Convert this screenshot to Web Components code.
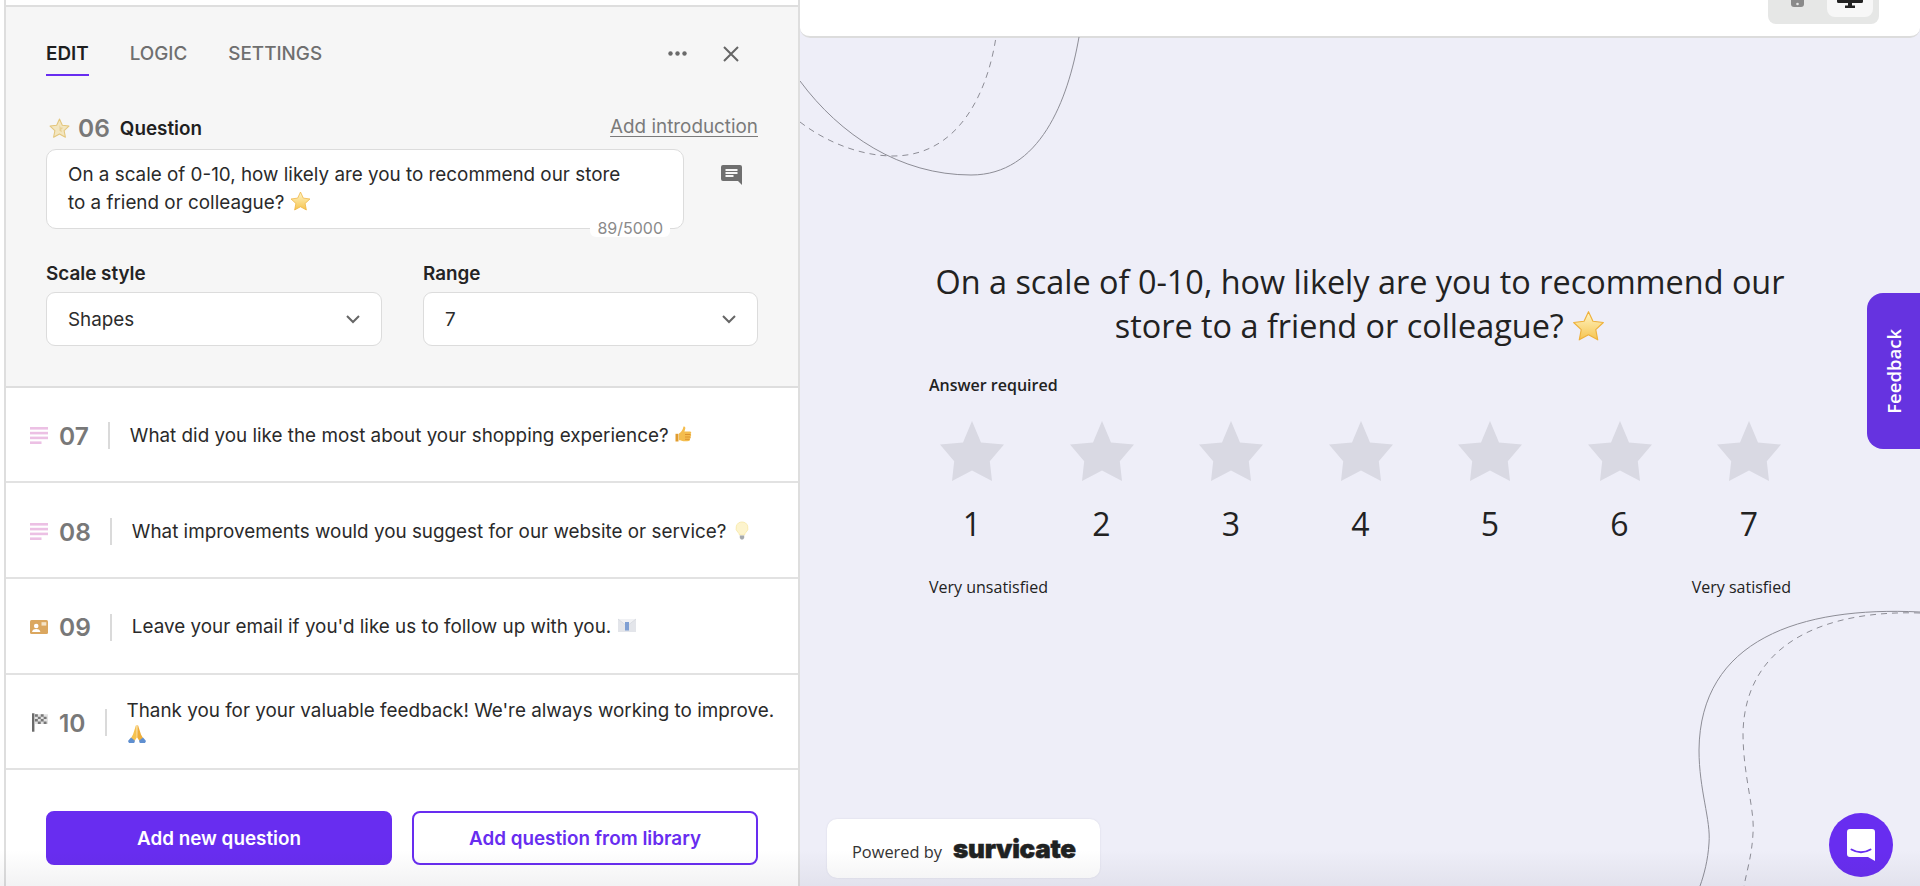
<!DOCTYPE html>
<html lang="en">
<head>
<meta charset="utf-8">
<title>Survey editor</title>
<style>
	html, body { margin: 0; padding: 0; height: 100%; background: #fff; overflow: hidden; }
</style>
</head>
<body>
<survey-app></survey-app>

<script>
const EMOJI = {
	star: `<svg viewBox="0 0 20 20"><defs><linearGradient id="g" x1="0" y1="0" x2="0" y2="1"><stop offset="0" stop-color="#fff6c8"/><stop offset="1" stop-color="#f6c44f"/></linearGradient></defs><path d="M10 1l2.700 5.800 6.300.8-4.600 4.300 1.200 6.200L10 15l-5.600 3.100 1.200-6.200L1 7.600l6.300-.8z" fill="url(#g)" stroke="#eeb13c" stroke-width=".7" stroke-linejoin="round"/></svg>`,
	thumb: `<svg viewBox="0 0 20 20"><path d="M9.500 1.500c1.300-.4 2 .7 1.800 2-.1 1-.6 2-.9 3h5.500c1.600 0 1.800 2 .6 2.400 1 .6.900 2.100-.2 2.500.8.700.5 2-.5 2.300.5.800.1 2-1 2.200-1.800.5-5 .6-7.200-.1-1-.4-1.600-.5-2.600-.5V8.500c1.800-.8 3.900-3.500 4.500-7z" fill="#f4bd4e"/><path d="M1.500 8.800h3v7.700h-3z" fill="#e09c2f"/><path d="M11 9.500h5.500M11 12h5.500M11 14.300h4.500" stroke="#d98f2b" stroke-width=".9" fill="none"/></svg>`,
	bulb: `<svg viewBox="0 0 20 20"><path d="M10 1a6 6 0 0 0-3.600 10.800c.7.600.9 1.300 1 2.200h5.200c.1-.9.300-1.600 1-2.200A6 6 0 0 0 10 1z" fill="#fdf4cd" stroke="#f8e8a8" stroke-width=".8"/><path d="M7.800 14.500h4.400v2.400l-1.200 1.600H9l-1.200-1.600z" fill="#a5a9ad"/></svg>`,
	mail: `<svg viewBox="0 0 20 20"><path d="M1 3h18v13H1z" fill="#e3e5ea"/><path d="M1 3l9 7 9-7" fill="#f0f1f4" stroke="#cfd2d9" stroke-width=".6"/><path d="M8 6h4v8.500H8z" fill="#7f9fd3"/></svg>`,
	pray: `<svg viewBox="0 0 20 20"><path d="M9.600 1c-.9.200-1.100 1.500-1.500 2.900L6 10.400 4 14l3.500 3 2.300-3.500z" fill="#f6c24f"/><path d="M10.400 1c.9.200 1.100 1.500 1.500 2.900l2.100 6.500 2 3.600-3.500 3-2.300-3.500z" fill="#eeae3a"/><path d="M1 17l3-3.600 4 3.300-.8 2.300H2z" fill="#5f8fd0"/><path d="M19 17l-3-3.600-4 3.300.8 2.300H18z" fill="#5f8fd0"/></svg>`
}

const TYPE_ICONS = {
	star: `<svg viewBox="0 0 20 20" width="21" height="21"><path d="M10 1l2.700 5.900 6.300.8-4.600 4.300 1.200 6.300L10 15.200l-5.600 3.100 1.200-6.300L1 7.700l6.300-.8z" fill="#f3e6c0" stroke="#e3c67c" stroke-width="1" stroke-linejoin="round"/><path d="M10 6.500l1 2.600 2.600.2-2 1.700.7 2.600-2.300-1.400z" fill="#e8d093"/></svg>`,
	lines: `<svg viewBox="0 0 18 17" width="18" height="17"><g fill="#ecc0e4"><rect width="18" height="2.600"/><rect y="4.800" width="18" height="2.600"/><rect y="9.600" width="18" height="2.600"/><rect y="14.400" width="11.500" height="2.600"/></g></svg>`,
	card: `<svg viewBox="0 0 18 14" width="18" height="14"><rect width="18" height="14" rx="1.500" fill="#dba75f"/><circle cx="6.200" cy="6" r="2.300" fill="#fff"/><path d="M2 12c.5-2.400 2.300-3 4.200-3s3.700.6 4.200 3z" fill="#fff"/><rect x="11.500" y="2.200" width="4.800" height="3.400" fill="#f5e4c8"/></svg>`,
	flag: `<svg viewBox="0 0 17 19" width="17" height="19" style="margin-left:1.500px"><rect x="0" y="0" width="2.500" height="19" fill="#6b6b6b"/><rect x="3" y="1" width="13.500" height="10" fill="#e2e2e2"/><path d="M3 1h3v2.500H3zM9 1h3v2.500H9zM6 3.500h3V6H6zM12 3.500h3V6h-3zM3 6h3v2.500H3zM9 6h3v2.500H9zM6 8.500h3V11H6zM12 8.500h3V11h-3z" fill="#777"/></svg>`
}

class EmojiIcon extends HTMLElement {
	constructor() {
		super()
		const shadow = this.attachShadow({ mode: 'open' })
		const size = this.getAttribute('size') || 20
		shadow.innerHTML = `
		<style>
			:host { display: inline-block; width: ${size}px; height: ${size}px; vertical-align: -3px; }
			svg { display: block; width: 100%; height: 100%; }
		</style>
		${EMOJI[this.getAttribute('name')]}
		`
	}
}
customElements.define('emoji-icon', EmojiIcon)

class TabBar extends HTMLElement {
	constructor() {
		super()
		const shadow = this.attachShadow({ mode: 'open' })
		shadow.innerHTML = `
		<style>
			:host { display: flex; align-items: flex-start; justify-content: space-between; }
			.tabs { display: flex; gap: 41px; }
			.tab {
				font-size: 18.850px;
				font-weight: 500;
				line-height: 24px;
				height: 32.500px;
				color: #6f6f6f;
			}
			.tab.active { color: #1e1e1e; font-weight: 600; border-bottom: 2.500px solid #682df0; }
			.tools { display: flex; align-items: center; gap: 36px; padding-top: 4px; padding-right: 19px; }
			svg { display: block; }
		</style>
		<div class="tabs">
			<div class="tab active">EDIT</div>
			<div class="tab">LOGIC</div>
			<div class="tab">SETTINGS</div>
		</div>
		<div class="tools">
			<svg width="19" height="5" viewBox="0 0 19 5" fill="#6a6a6a"><circle cx="2.500" cy="2.500" r="2.200"/><circle cx="9.500" cy="2.500" r="2.200"/><circle cx="16.500" cy="2.500" r="2.200"/></svg>
			<svg width="16" height="16" viewBox="0 0 16 16" stroke="#666" stroke-width="2" fill="none"><path d="M1 1l14 14M15 1L1 15"/></svg>
		</div>
		`
	}
}
customElements.define('tab-bar', TabBar)

class SelectBox extends HTMLElement {
	constructor() {
		super()
		const shadow = this.attachShadow({ mode: 'open' })
		shadow.innerHTML = `
		<style>
			:host { display: block; }
			label { display: block; font-size: 18.850px; font-weight: 600; line-height: 26px; color: #242424; margin-bottom: 5px; }
			.box {
				display: flex;
				align-items: center;
				justify-content: space-between;
				box-sizing: border-box;
				height: 54px;
				padding: 0 21px;
				background: #fff;
				border: 1.500px solid #dcdcdc;
				border-radius: 9px;
				font-size: 18.850px;
				color: #2c2c2c;
			}
			svg { display: block; }
		</style>
		<label>${this.getAttribute('label')}</label>
		<div class="box">
			<slot></slot>
			<svg width="14" height="9" viewBox="0 0 14 9" fill="none" stroke="#666" stroke-width="2"><path d="M1 1l6 6 6-6"/></svg>
		</div>
		`
	}
}
customElements.define('select-box', SelectBox)

class QuestionEditor extends HTMLElement {
	constructor() {
		super()
		const shadow = this.attachShadow({ mode: 'open' })
		shadow.innerHTML = `
		<style>
			:host {
				display: block;
				box-sizing: border-box;
				height: 380.500px;
				padding: 34.500px 40px 0;
				background: #f6f6f6;
				border-bottom: 2px solid #dedede;
			}
			tab-bar { height: 35px; }
			.head {
				display: flex;
				align-items: center;
				height: 32px;
				margin-top: 35.500px;
				margin-bottom: 5px;
			}
			.star { width: 21px; height: 21px; margin: 0 8px 0 3px; }
			.star svg { display: block; }
			.num { font-size: 24.500px; font-weight: 600; color: #787878; }
			.title { font-size: 18.850px; font-weight: 600; color: #1f1f1f; margin-left: 10px; }
			.intro { margin-left: auto; font-size: 18.850px; color: #7a7a7a; text-decoration: underline; text-underline-offset: 3px; margin-top: -4px; }
			.editor { display: flex; }
			.area {
				position: relative;
				box-sizing: border-box;
				width: 638px;
				height: 80px;
				padding: 11px 21px;
				background: #fff;
				border: 1.500px solid #dcdcdc;
				border-radius: 10px;
				font-size: 18.850px;
				line-height: 28px;
				color: #2a2a2a;
			}
			.count {
				position: absolute;
				right: 13px;
				bottom: -9px;
				padding: 0 7px;
				font-size: 16px;
				line-height: 18px;
				color: #8a8a8a;
				background: #fff;
				border-radius: 6px;
			}
			.comment { margin: 16px 0 0 37px; display: block; }
			.selects { display: grid; grid-template-columns: 336px 335px; column-gap: 41px; margin-top: 32px; }
		</style>
		<tab-bar></tab-bar>
		<div class="head">
			<span class="star">${TYPE_ICONS.star}</span>
			<span class="num">06</span>
			<span class="title">Question</span>
			<span class="intro">Add introduction</span>
		</div>
		<div class="editor">
			<div class="area">
				<slot></slot>
				<span class="count">89/5000</span>
			</div>
			<svg class="comment" width="21" height="20" viewBox="0 0 21 20"><path d="M2 0h17a2 2 0 0 1 2 2v18l-4-4H2a2 2 0 0 1-2-2V2a2 2 0 0 1 2-2z" fill="#6f6f6f"/><path d="M4.500 5h12M4.500 8h12M4.500 11h8" stroke="#f6f6f6" stroke-width="1.800"/></svg>
		</div>
		<div class="selects">
			<select-box label="Scale style">Shapes</select-box>
			<select-box label="Range">7</select-box>
		</div>
		`
	}
}
customElements.define('question-editor', QuestionEditor)

class QuestionRow extends HTMLElement {
	constructor() {
		super()
		const shadow = this.attachShadow({ mode: 'open' })
		shadow.innerHTML = `
		<style>
			:host {
				display: flex;
				align-items: center;
				box-sizing: border-box;
				height: 95.700px;
				padding: 3px 20px 0 24px;
				background: #fff;
				border-bottom: 2px solid #e2e2e2;
				font-size: 18.850px;
				line-height: 24px;
				color: #2a2a2a;
			}
			.icon { width: 18px; display: flex; justify-content: center; margin-right: 11px; }
			.num { font-size: 24.500px; font-weight: 600; color: #787878; }
			.sep { width: 1.500px; height: 27px; background: #dadada; margin: 0 20px 0 19.500px; flex: none; }
			svg { display: block; }
		</style>
		<span class="icon">${TYPE_ICONS[this.getAttribute('type')]}</span>
		<span class="num">${this.getAttribute('num')}</span>
		<span class="sep"></span>
		<div class="text"><slot></slot></div>
		`
	}
}
customElements.define('question-row', QuestionRow)

class ActionButton extends HTMLElement {
	constructor() {
		super()
		const shadow = this.attachShadow({ mode: 'open' })
		const outline = this.hasAttribute('outline')
		shadow.innerHTML = `
		<style>
			:host {
				display: flex;
				align-items: center;
				justify-content: center;
				box-sizing: border-box;
				height: 54px;
				border-radius: 8px;
				font-size: 18.850px;
				font-weight: 600;
				background: ${outline ? '#fff' : '#682df0'};
				color: ${outline ? '#682df0' : '#fff'};
				border: 2.500px solid #682df0;
			}
		</style>
		<slot></slot>
		`
	}
}
customElements.define('action-button', ActionButton)

class EditorPanel extends HTMLElement {
	constructor() {
		super()
		const shadow = this.attachShadow({ mode: 'open' })
		shadow.innerHTML = `
		<style>
			:host {
				display: block;
				box-sizing: border-box;
				width: 796px;
				height: 100%;
				margin-left: 4px;
				border-left: 2px solid #dedede;
				border-right: 2px solid #dedede;
				background: #fff;
				font-family: Inter, "Liberation Sans", sans-serif;
			}
			.stub { height: 7px; box-sizing: border-box; border-bottom: 2px solid #dedede; }
			.buttons { display: grid; grid-template-columns: 346px 346px; column-gap: 20px; padding: 41px 40px 0; }
		</style>
		<div class="stub"></div>
		<question-editor>On a scale of 0-10, how likely are you to recommend our store<br>to a friend or colleague? <emoji-icon name="star" size="21"></emoji-icon></question-editor>
		<question-row type="lines" num="07">What did you like the most about your shopping experience? <emoji-icon name="thumb"></emoji-icon></question-row>
		<question-row type="lines" num="08">What improvements would you suggest for our website or service? <emoji-icon name="bulb"></emoji-icon></question-row>
		<question-row type="card" num="09">Leave your email if you'd like us to follow up with you. <emoji-icon name="mail"></emoji-icon></question-row>
		<question-row type="flag" num="10">Thank you for your valuable feedback! We're always working to improve. <emoji-icon name="pray"></emoji-icon></question-row>
		<div class="buttons">
			<action-button>Add new question</action-button>
			<action-button outline>Add question from library</action-button>
		</div>
		`
	}
}
customElements.define('editor-panel', EditorPanel)

class DeviceBar extends HTMLElement {
	constructor() {
		super()
		const shadow = this.attachShadow({ mode: 'open' })
		shadow.innerHTML = `
		<style>
			:host {
				display: flex;
				justify-content: flex-end;
				box-sizing: border-box;
				height: 38px;
				padding-right: 41px;
				background: #fff;
				border-bottom: 2px solid #dcdcdc;
				border-radius: 0 0 10px 10px;
			}
			.toggle {
				display: flex;
				align-items: flex-end;
				justify-content: space-between;
				box-sizing: border-box;
				width: 111px;
				height: 23.500px;
				padding: 0 6px 0 23px;
				background: #e6e7e6;
				border-radius: 0 0 8px 8px;
			}
			.phone { margin-bottom: 16.500px; }
			.tile {
				display: flex;
				justify-content: center;
				align-self: flex-start;
				width: 46px;
				height: 17px;
				background: #f7f7f7;
				border-radius: 0 0 8px 8px;
			}
			svg { display: block; }
		</style>
		<div class="toggle">
			<svg class="phone" width="13" height="7" viewBox="0 0 13 7"><path d="M0 0h13v4a3 3 0 0 1-3 3H3a3 3 0 0 1-3-3z" fill="#8a8a8a"/><circle cx="6.500" cy="4" r="1.300" fill="#e6e7e6"/></svg>
			<div class="tile">
				<svg width="26" height="8" viewBox="0 0 26 8"><path d="M0 0h26v1.500a1.500 1.500 0 0 1-1.500 1.500H15v2.500h3V8H8V5.500h3V3H1.500A1.500 1.500 0 0 1 0 1.500z" fill="#222"/></svg>
			</div>
		</div>
		`
	}
}
customElements.define('device-bar', DeviceBar)

class StarScale extends HTMLElement {
	constructor() {
		super()
		const shadow = this.attachShadow({ mode: 'open' })
		const count = Number(this.getAttribute('count'))
		let items = ''
		for (let i = 1; i <= count; i++) {
			items += `
			<div class="item">
				<svg width="64" height="60" viewBox="0 0 64 60"><path d="M32 0l9 21.500L64 23.500 49.800 40.300 52 60 32 49.500 12 60l2.200-19.700L0 23.500l23-2z" fill="#d9d9e3"/></svg>
				<span>${i}</span>
			</div>`
		}
		shadow.innerHTML = `
		<style>
			:host { display: flex; justify-content: space-between; margin: 0 10px 0 11px; }
			.item { display: flex; flex-direction: column; align-items: center; width: 64px; }
			svg { display: block; }
			span { font-size: 32px; line-height: 44px; margin-top: 21px; color: #222; }
		</style>
		${items}
		`
	}
}
customElements.define('star-scale', StarScale)

class PoweredBy extends HTMLElement {
	constructor() {
		super()
		const shadow = this.attachShadow({ mode: 'open' })
		shadow.innerHTML = `
		<style>
			:host {
				position: absolute;
				left: 27px;
				bottom: 8px;
				display: flex;
				align-items: center;
				box-sizing: border-box;
				width: 273px;
				height: 59px;
				padding: 5px 0 0 25px;
				background: #fff;
				border-radius: 10px;
				box-shadow: 0 0 2px rgba(60, 60, 90, .12);
				font-family: "Open Sans", sans-serif;
				font-size: 16.400px;
				color: #333;
			}
			b {
				margin-left: 11px;
				margin-top: -6px;
				font-family: Inter, sans-serif;
				font-weight: 900;
				font-size: 26px;
				letter-spacing: -.3px;
				color: #1f2222;
				-webkit-text-stroke: .5px #1f2222;
			}
		</style>
		Powered by <b>survicate</b>
		`
	}
}
customElements.define('powered-by', PoweredBy)

class FeedbackTab extends HTMLElement {
	constructor() {
		super()
		const shadow = this.attachShadow({ mode: 'open' })
		shadow.innerHTML = `
		<style>
			:host {
				position: absolute;
				right: 0;
				top: 293px;
				display: flex;
				align-items: center;
				justify-content: center;
				width: 53px;
				height: 156px;
				background: #6633e0;
				border-radius: 16px 0 0 16px;
			}
			span {
				writing-mode: vertical-rl;
				transform: rotate(180deg);
				font-family: "Open Sans", sans-serif;
				font-size: 18.500px;
				font-weight: 600;
				color: #fff;
			}
		</style>
		<span>Feedback</span>
		`
	}
}
customElements.define('feedback-tab', FeedbackTab)

class ChatLauncher extends HTMLElement {
	constructor() {
		super()
		const shadow = this.attachShadow({ mode: 'open' })
		shadow.innerHTML = `
		<style>
			:host {
				position: absolute;
				left: 1029px;
				top: 813px;
				display: flex;
				align-items: center;
				justify-content: center;
				width: 64px;
				height: 64px;
				border-radius: 50%;
				background: #682df0;
			}
			svg { display: block; }
		</style>
		<svg width="28" height="32" viewBox="0 0 28 32"><path d="M3 0h22a3 3 0 0 1 3 3v29l-7-4H3a3 3 0 0 1-3-3V3a3 3 0 0 1 3-3z" fill="#fff"/><path d="M4.500 20.500c6 3.500 13 3.500 19 0" fill="none" stroke="#682df0" stroke-width="2" stroke-linecap="round"/></svg>
		`
	}
}
customElements.define('chat-launcher', ChatLauncher)

class SurveyPreview extends HTMLElement {
	constructor() {
		super()
		const shadow = this.attachShadow({ mode: 'open' })
		shadow.innerHTML = `
		<style>
			:host {
				display: block;
				position: relative;
				flex: 1;
				height: 100%;
				overflow: hidden;
				background: #eeeef8;
				font-family: "Open Sans", sans-serif;
				color: #222;
			}
			.curves { position: absolute; left: 0; top: 0; }
			.curves path { fill: none; stroke: #8d8d96; stroke-width: 1; }
			.curves .dash { stroke-dasharray: 6 5; }
			.card { position: relative; width: 862px; margin: 0 auto; padding-top: 222.300px; }
			h1 { margin: 0; font-size: 32.400px; font-weight: 400; line-height: 43.500px; text-align: center; color: #222; }
			.req { font-size: 16px; font-weight: 600; line-height: 22px; margin: 26.400px 0 25.300px; }
			.ends { display: flex; justify-content: space-between; font-size: 16px; line-height: 22px; margin-top: 30px; }
		</style>
		<svg class="curves" width="1120" height="886" viewBox="800 0 1120 886">
			<path d="M800 81C840 135 900 175 971 175C1040 175 1068 100 1079 37"/>
			<path class="dash" d="M800 122C830 145 865 156 893 156C960 156 988 90 996 37"/>
			<path d="M1920 612C1800 606 1700 640 1699 750C1699 790 1711 820 1709 843C1708 860 1704 875 1700 886"/>
			<path class="dash" d="M1920 613C1830 610 1745 640 1743 733C1743 775 1755 810 1753 833C1752 855 1747 870 1744 886"/>
		</svg>
		<device-bar></device-bar>
		<div class="card">
			<h1>On a scale of 0-10, how likely are you to recommend our store to a friend or colleague? <emoji-icon name="star" size="33" style="vertical-align:-5px"></emoji-icon></h1>
			<div class="req">Answer required</div>
			<star-scale count="7"></star-scale>
			<div class="ends"><span>Very unsatisfied</span><span>Very satisfied</span></div>
		</div>
		<powered-by></powered-by>
		<feedback-tab></feedback-tab>
		<chat-launcher></chat-launcher>
		`
	}
}
customElements.define('survey-preview', SurveyPreview)

class SurveyApp extends HTMLElement {
	constructor() {
		super()
		const shadow = this.attachShadow({ mode: 'open' })
		shadow.innerHTML = `
		<style>
			:host { display: flex; position: relative; width: 100%; height: 100vh; overflow: hidden; }
			.fade {
				position: absolute;
				left: 0;
				right: 0;
				bottom: 0;
				height: 36px;
				pointer-events: none;
				background: linear-gradient(to bottom, rgba(40, 40, 60, 0), rgba(40, 40, 60, .06));
			}
		</style>
		<editor-panel></editor-panel>
		<survey-preview></survey-preview>
		<div class="fade"></div>
		`
	}
}
customElements.define('survey-app', SurveyApp)
</script>
</body>
</html>
